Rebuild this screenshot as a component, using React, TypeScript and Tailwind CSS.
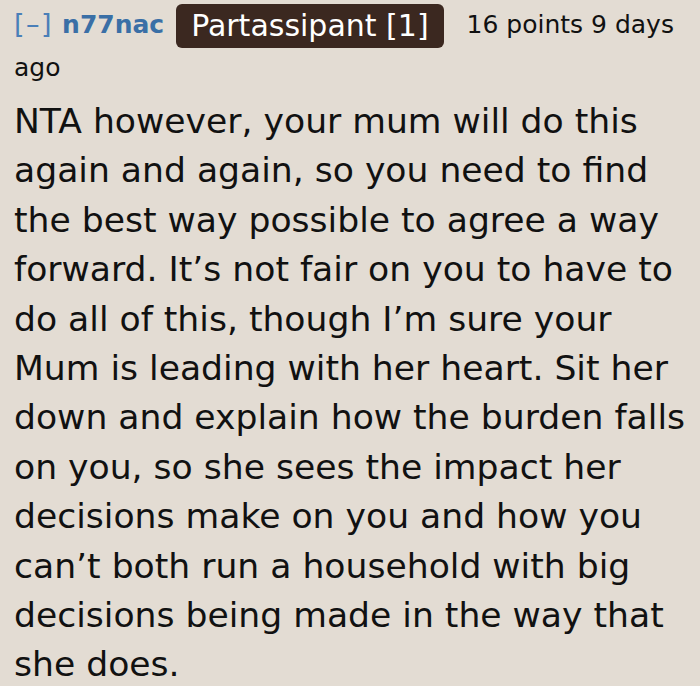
export default function App() {
  return (
    <div className="min-h-[686px] w-[700px] bg-[#e3dcd3] pl-[14px] pt-[4px] text-[#111] font-['DejaVu_Sans',Verdana,sans-serif] overflow-hidden">
      {/* comment header */}
      <div className="text-[25px] leading-[40px]">
        <span className="text-[27px] text-[#4a7fb8] tracking-[1.5px]">[–]</span>
        <span className="ml-[9px] font-bold text-[#3a6fa6]">n77nac</span>
        <span className="ml-[12px] inline-block rounded-[6px] bg-[#3b2820] px-[15px] h-[44px] leading-[44px] text-[30px] text-white align-middle">
          Partassipant [1]
        </span>
        <span className="ml-[23px]">16 points 9 days ago</span>
      </div>

      {/* comment body */}
      <p className="mt-[9px] text-[34.6px] leading-[49.4px]">
        NTA however, your mum will do this again and again, so you need to find the best way possible to agree a way forward. It’s not fair on you to have to do all of this, though I’m sure your Mum is leading with her heart. Sit her down and explain how the burden falls on you, so she sees the impact her decisions make on you and how you can’t both run a household with big decisions being made in the way that she does.
      </p>
    </div>
  )
}
